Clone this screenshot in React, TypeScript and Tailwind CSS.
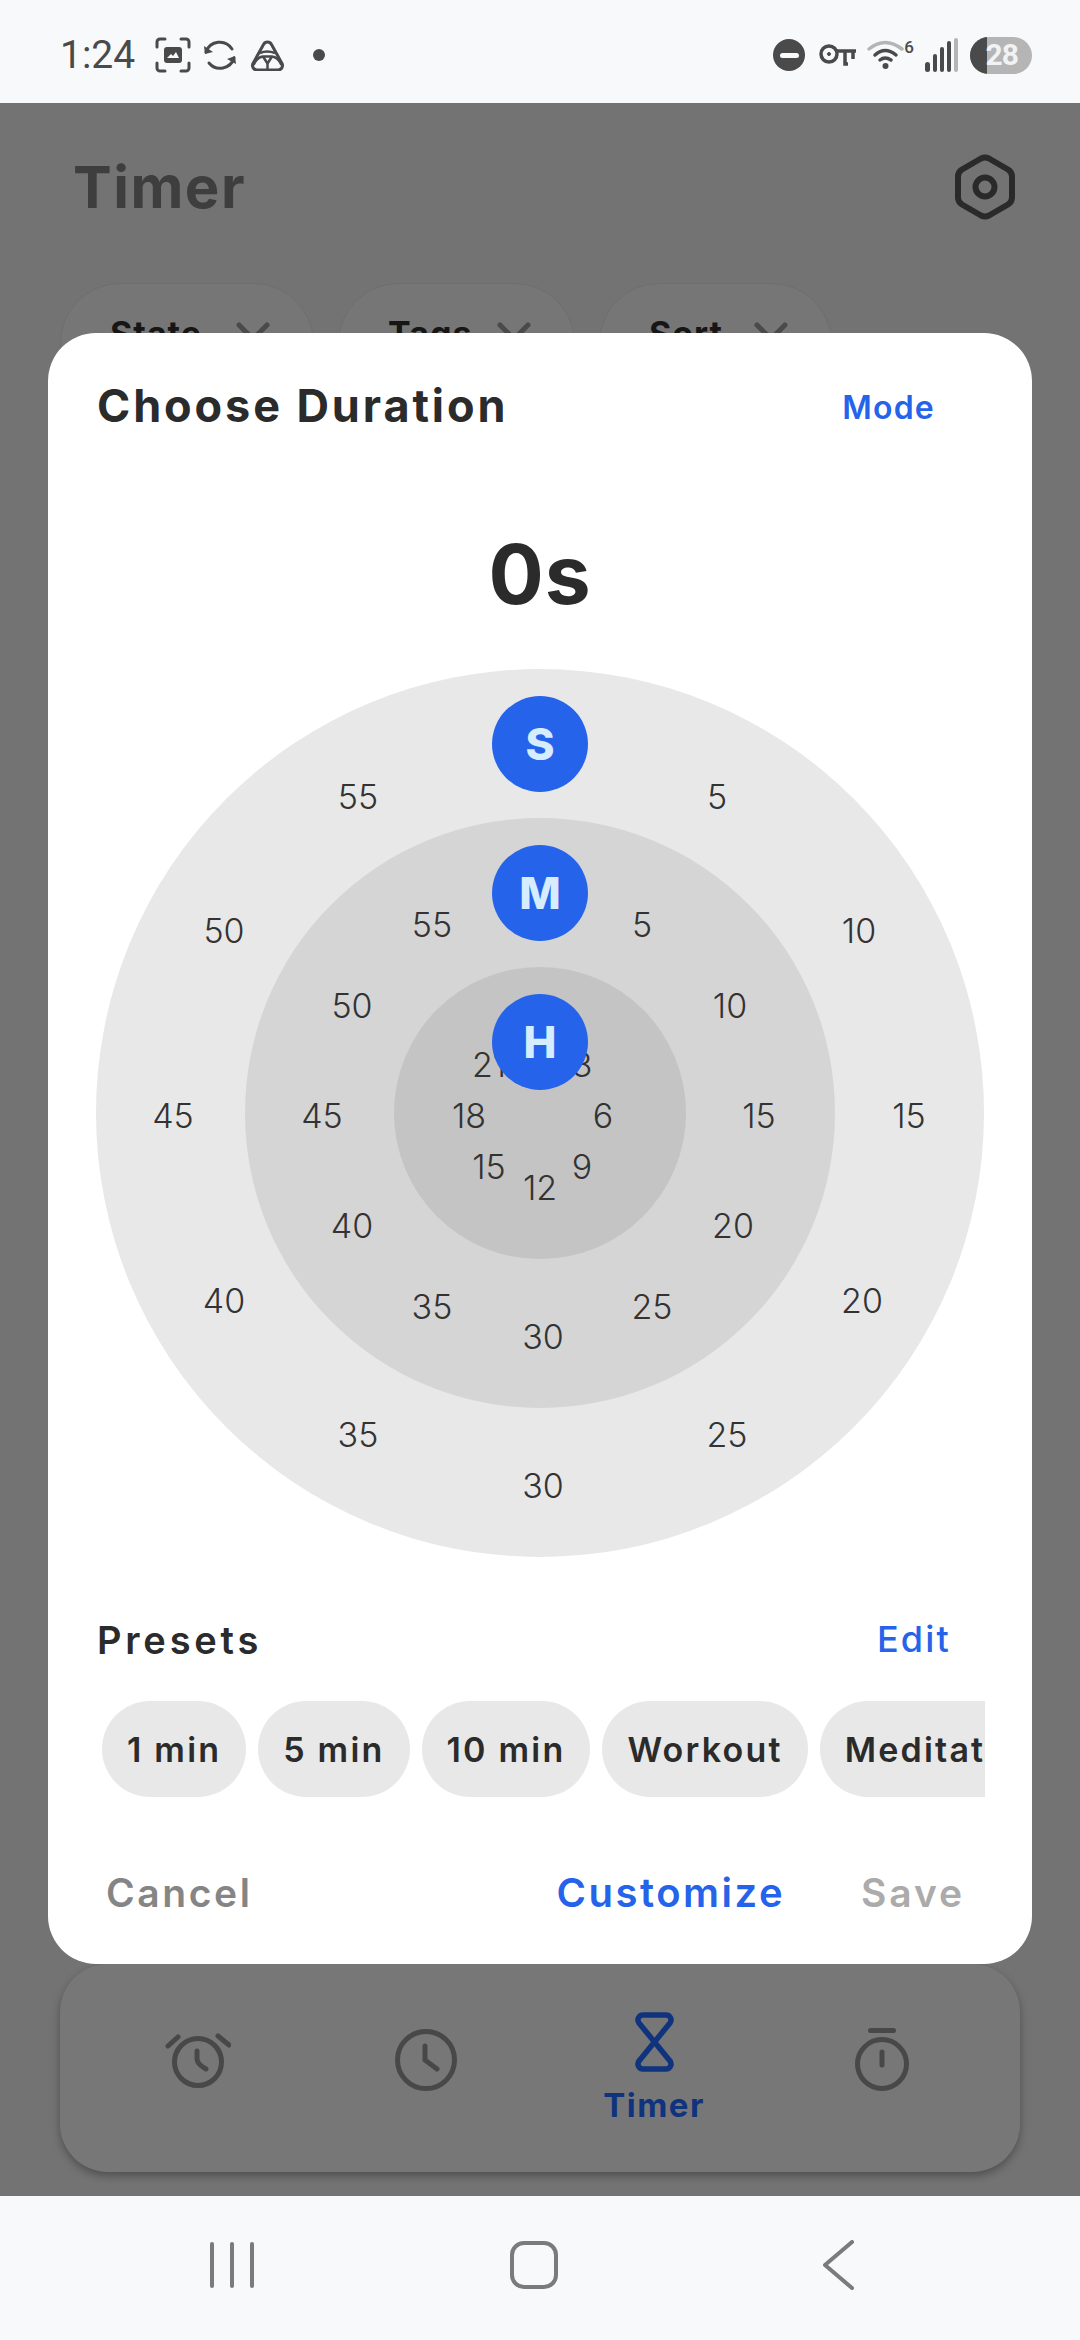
const sans = "font-['Inter',sans-serif]";

// dial labels, centre x/y in pixels inside the 888 square dial
const labels = [
  // seconds ring
  { t: '55', x: 262, y: 128 }, { t: '5', x: 621, y: 128 },
  { t: '50', x: 128, y: 262 }, { t: '10', x: 763, y: 262 },
  { t: '45', x: 77, y: 447 }, { t: '15', x: 813, y: 447 },
  { t: '40', x: 128, y: 632 }, { t: '20', x: 766, y: 632 },
  { t: '35', x: 262, y: 766 }, { t: '25', x: 631, y: 766 },
  { t: '30', x: 447, y: 817 },
  // minutes ring
  { t: '55', x: 336, y: 256 }, { t: '5', x: 546, y: 256 },
  { t: '50', x: 256, y: 337 }, { t: '10', x: 634, y: 337 },
  { t: '45', x: 226, y: 447 }, { t: '15', x: 663, y: 447 },
  { t: '40', x: 256, y: 557 }, { t: '20', x: 637, y: 557 },
  { t: '35', x: 336, y: 638 }, { t: '25', x: 556, y: 638 },
  { t: '30', x: 447, y: 668 },
  // hours ring
  { t: '21', x: 393, y: 396 }, { t: '3', x: 486, y: 396 },
  { t: '18', x: 373, y: 447 }, { t: '6', x: 507, y: 447 },
  { t: '15', x: 393, y: 498 }, { t: '9', x: 486, y: 498 },
  { t: '12', x: 444, y: 519 },
];

const badges = [
  { t: 'S', y: 75 },
  { t: 'M', y: 224 },
  { t: 'H', y: 373 },
];

const presets = ['1 min', '5 min', '10 min', 'Workout', 'Meditation'];

function StatusLeft() {
  return (
    <div className="flex items-center">
      <span className="font-['Roboto',sans-serif] text-[39px] leading-none text-[#4a4a4a] w-[95px] ml-[60px]">1:24</span>
      <svg width="36" height="36" viewBox="0 0 36 36" fill="none" stroke="#4a4a4a" strokeWidth="3" strokeLinecap="round">
        <path d="M2 10V5a3 3 0 0 1 3-3h5M26 2h5a3 3 0 0 1 3 3v5M34 26v5a3 3 0 0 1-3 3h-5M10 34H5a3 3 0 0 1-3-3v-5" />
        <rect x="9" y="10" width="18" height="16" rx="3" fill="#4a4a4a" stroke="none" />
        <path d="M12 21l4-4 2 2 3-4 3 6z" fill="#f8f9fb" stroke="none" />
      </svg>
      <svg width="34" height="34" viewBox="0 0 34 34" className="ml-[12px]" fill="none" stroke="#4a4a4a" strokeWidth="3" strokeLinecap="round">
        <path d="M3 14A14.5 14.5 0 0 1 29 11" />
        <path d="M31 20A14.5 14.5 0 0 1 6 25" />
        <path d="M1 8l1 8 8-2z" fill="#4a4a4a" stroke="none" />
        <path d="M33 26l-1-8-8 3z" fill="#4a4a4a" stroke="none" />
      </svg>
      <svg width="33" height="31" viewBox="0 0 33 31" className="ml-[14px]" fill="none" stroke="#4a4a4a" strokeWidth="3" strokeLinejoin="round">
        <path d="M12.500 4.500a4.500 4.500 0 0 1 8 0l10.500 19a4.500 4.500 0 0 1-4 6.500h-21a4.500 4.500 0 0 1-4-6.500z" />
        <path d="M9 13q7-3 15 0M2.500 25Q6 17 12 16.500h9q6 .5 9.500 8.500" strokeWidth="2.500" />
        <path d="M12 16.500l4.500 7 4.500-7M16.500 23.500V30" strokeWidth="2.500" />
      </svg>
      <span className="w-[12px] h-[12px] rounded-full bg-[#4a4a4a] ml-[29px]" />
    </div>
  );
}

function StatusRight() {
  return (
    <div className="flex items-center mr-[48px]">
      <span className="w-[32px] h-[32px] rounded-full bg-[#4a4a4a] flex items-center justify-center">
        <span className="w-[19px] h-[5px] rounded-full bg-[#f8f9fb]" />
      </span>
      <svg width="37" height="22" viewBox="0 0 37 22" className="ml-[14px]" fill="none" stroke="#4a4a4a" strokeWidth="3.500">
        <circle cx="10" cy="10" r="8" />
        <circle cx="10" cy="10" r="1.500" fill="#4a4a4a" strokeWidth="1" />
        <path d="M18 7h19M26 7v13h3M34 7v8" />
      </svg>
      <div className="relative w-[47px] h-[32px] ml-[11px]">
        <svg width="37" height="30" viewBox="0 0 37 30" fill="none" strokeLinecap="round" strokeWidth="3.500">
          <path d="M2 10Q18 -3 35 10" stroke="#b5b5b5" />
          <path d="M8 16Q18 7 29 16" stroke="#4a4a4a" />
          <path d="M13 21Q18 17 24 21" stroke="#4a4a4a" />
          <circle cx="18.500" cy="27" r="3" fill="#4a4a4a" stroke="none" />
        </svg>
        <span className="absolute right-0 top-[-1px] font-['Roboto',sans-serif] text-[17px] leading-[18px] font-medium text-[#4a4a4a]">6</span>
      </div>
      <div className="flex items-end gap-[3px] h-[34px] ml-[11px]">
        <span className="w-[5px] h-[10px] rounded-full bg-[#4a4a4a]" />
        <span className="w-[4px] h-[18px] rounded-full bg-[#4a4a4a]" />
        <span className="w-[4px] h-[25px] rounded-full bg-[#4a4a4a]" />
        <span className="w-[4px] h-[31px] rounded-full bg-[#4a4a4a]" />
        <span className="w-[4px] h-[34px] rounded-full bg-[#b5b5b5]" />
      </div>
      <div className="relative w-[62px] h-[37px] rounded-full bg-[#b5b5b5] overflow-hidden ml-[12px] flex items-center justify-end">
        <span className="absolute left-0 top-0 h-full w-[17px] bg-[#4a4a4a]" />
        <span className="relative font-['Roboto',sans-serif] font-bold text-[30px] leading-none text-[#f2f2f2] mr-[14px] tracking-[-1px]">28</span>
      </div>
    </div>
  );
}

function Chip({ label, width }: { label: string; width: string }) {
  return (
    <div className={`${width} h-[120px] rounded-[60px] bg-[#767676] border border-[#6e6e6e] flex items-start justify-between pt-[30px] pl-[49px] pr-[43px]`}>
      <span className={`${sans} font-bold text-[34px] leading-[40px] tracking-[1px] text-[#161616]`}>{label}</span>
      <svg width="34" height="22" viewBox="0 0 34 22" className="mt-[8px]" fill="none" stroke="#4a4a4a" strokeWidth="5" strokeLinecap="round">
        <path d="M3 3l14 14L31 3" />
      </svg>
    </div>
  );
}

function BottomNav() {
  return (
    <div className="mx-[60px] mb-[24px] h-[208px] rounded-[48px] bg-[#777777] shadow-[0_4px_8px_rgba(0,0,0,0.3)] grid grid-cols-4 px-[24px]">
      <div className="flex justify-center pt-[69px]">
        <svg width="66" height="58" viewBox="0 0 66 58" fill="none" stroke="#484848" strokeWidth="5" strokeLinecap="round" strokeLinejoin="round">
          <circle cx="33" cy="29" r="23.500" />
          <path d="M32 18v8q0 5 9 10" />
          <path d="M3 13L13 4M53 3l11 9" />
        </svg>
      </div>
      <div className="flex justify-center pt-[65px]">
        <svg width="62" height="62" viewBox="0 0 62 62" fill="none" stroke="#484848" strokeWidth="5" strokeLinecap="round" strokeLinejoin="round">
          <circle cx="31" cy="31" r="28.500" />
          <path d="M30 17v14l12 9" />
        </svg>
      </div>
      <div className="flex flex-col items-center pt-[48px]">
        <svg width="39" height="60" viewBox="0 0 39 60" fill="none" stroke="#10337e" strokeWidth="5.500" strokeLinejoin="round">
          <path d="M8 3H31A5 5 0 0 1 35 11L4 49A5 5 0 0 0 8 57H31A5 5 0 0 0 35 49L4 11A5 5 0 0 1 8 3Z" />
        </svg>
        <span className={`${sans} font-bold text-[33px] leading-[36px] tracking-[1.5px] mt-[15px] text-[#10337e]`}>Timer</span>
      </div>
      <div className="flex justify-center pt-[62px]">
        <svg width="54" height="66" viewBox="0 0 54 66" fill="none" stroke="#484848" strokeWidth="5" strokeLinecap="round">
          <circle cx="27" cy="38" r="24.500" />
          <path d="M15.500 4.500H38.500" />
          <path d="M27 26v13" />
        </svg>
      </div>
    </div>
  );
}

function Dial() {
  return (
    <div className="relative w-[888px] h-[888px] mx-auto rounded-full bg-[#e8e8e8] flex items-center justify-center">
      <div className="w-[590px] h-[590px] rounded-full bg-[#d5d5d5] flex items-center justify-center">
        <div className="w-[292px] h-[292px] rounded-full bg-[#c4c4c4]" />
      </div>
      {labels.map((l, i) => (
        <span
          key={i}
          className={`${sans} absolute -translate-x-1/2 -translate-y-1/2 font-light text-[34px] leading-none text-[#333333]`}
          style={{ left: l.x, top: l.y }}
        >
          {l.t}
        </span>
      ))}
      {badges.map((b) => (
        <span
          key={b.t}
          className={`${sans} absolute left-1/2 -translate-x-1/2 -translate-y-1/2 w-[96px] h-[96px] rounded-full bg-[#2563eb] flex items-center justify-center font-extrabold text-[44px] text-[#d6ecff]`}
          style={{ top: b.y }}
        >
          {b.t}
        </span>
      ))}
    </div>
  );
}

function Modal() {
  return (
    <div className="absolute left-[48px] top-[333px] w-[984px] h-[1631px] rounded-[48px] bg-white flex flex-col">
      <div className="flex items-center justify-between pl-[49px] pr-[97px] pt-[43px]">
        <span className={`${sans} font-bold text-[45px] leading-[60px] tracking-[2.9px] text-[#2b2b2b]`}>Choose Duration</span>
        <span className={`${sans} font-semibold text-[32px] tracking-[1.2px] mt-[4px] text-[#2563eb]`}>Mode</span>
      </div>
      <div className={`${sans} font-bold text-[82px] leading-[90px] tracking-[1px] text-center text-[#2b2b2b] mt-[94px]`}>0s</div>
      <div className="mt-[49px]">
        <Dial />
      </div>
      <div className="flex items-center justify-between pl-[49px] pr-[81px] mt-[57px]">
        <span className={`${sans} font-semibold text-[38px] leading-[50px] tracking-[3.800px] text-[#2b2b2b]`}>Presets</span>
        <span className={`${sans} font-medium text-[36px] leading-[51px] tracking-[2.200px] text-[#2563eb]`}>Edit</span>
      </div>
      <div className="flex gap-[12px] ml-[54px] w-[883px] overflow-hidden mt-[36px]">
        {presets.map((p) => (
          <span key={p} className={`${sans} shrink-0 h-[96px] rounded-[48px] bg-[#e8e8e8] px-[25px] flex items-center font-semibold text-[34px] tracking-[2.200px] text-[#2b2b2b]`}>
            {p}
          </span>
        ))}
      </div>
      <div className="flex items-center pl-[58px] pr-[67px] mt-[66px]">
        <span className={`${sans} font-semibold text-[39px] tracking-[2.600px] text-[#858585]`}>Cancel</span>
        <span className={`${sans} font-semibold text-[40px] tracking-[2.500px] text-[#2563eb] ml-auto`}>Customize</span>
        <span className={`${sans} font-semibold text-[39px] tracking-[2.900px] text-[#ababab] ml-[76px]`}>Save</span>
      </div>
    </div>
  );
}

export default function App() {
  return (
    <div className="relative w-[1080px] h-[2340px] flex flex-col bg-[#f8f9fb] overflow-hidden">
      <div className="h-[103px] shrink-0 flex items-center justify-between pt-[7px]">
        <StatusLeft />
        <StatusRight />
      </div>
      <div className="flex-1 bg-[#737373] flex flex-col">
        <div className="flex items-center justify-between pl-[73px] pr-[65px] pt-[48px]">
          <span className={`${sans} font-bold text-[58px] leading-[72px] tracking-[1.5px] text-[#3e3e3e]`}>Timer</span>
          <svg width="60" height="66" viewBox="0 0 60 66" fill="none" stroke="#2a2a2a" strokeWidth="6" strokeLinejoin="round">
            <path d="M26 4.500q4-2 8 0l19 11q4 2.500 4 7v21q0 4.500-4 7l-19 11q-4 2-8 0l-19-11q-4-2.500-4-7v-21q0-4.500 4-7z" />
            <circle cx="30" cy="33" r="9.500" />
          </svg>
        </div>
        <div className="flex gap-[24px] pl-[60px] mt-[60px]">
          <Chip label="State" width="w-[254px]" />
          <Chip label="Tags" width="w-[237px]" />
          <Chip label="Sort" width="w-[233px]" />
        </div>
        <div className="flex-1" />
        <BottomNav />
      </div>
      <div className="h-[144px] shrink-0 flex items-center pb-[6px]">
        <div className="flex gap-[16px] ml-[210px]">
          <span className="w-[4px] h-[46px] rounded-full bg-[#7b7b7b]" />
          <span className="w-[4px] h-[46px] rounded-full bg-[#7b7b7b]" />
          <span className="w-[4px] h-[46px] rounded-full bg-[#7b7b7b]" />
        </div>
        <span className="w-[48px] h-[48px] rounded-[14px] border-[4px] border-[#7b7b7b] ml-[256px]" />
        <svg width="32" height="50" viewBox="0 0 32 50" className="ml-[264px]" fill="none" stroke="#7b7b7b" strokeWidth="4" strokeLinecap="round" strokeLinejoin="round">
          <path d="M30 2L3 25l27 23" />
        </svg>
      </div>
      <Modal />
    </div>
  );
}
